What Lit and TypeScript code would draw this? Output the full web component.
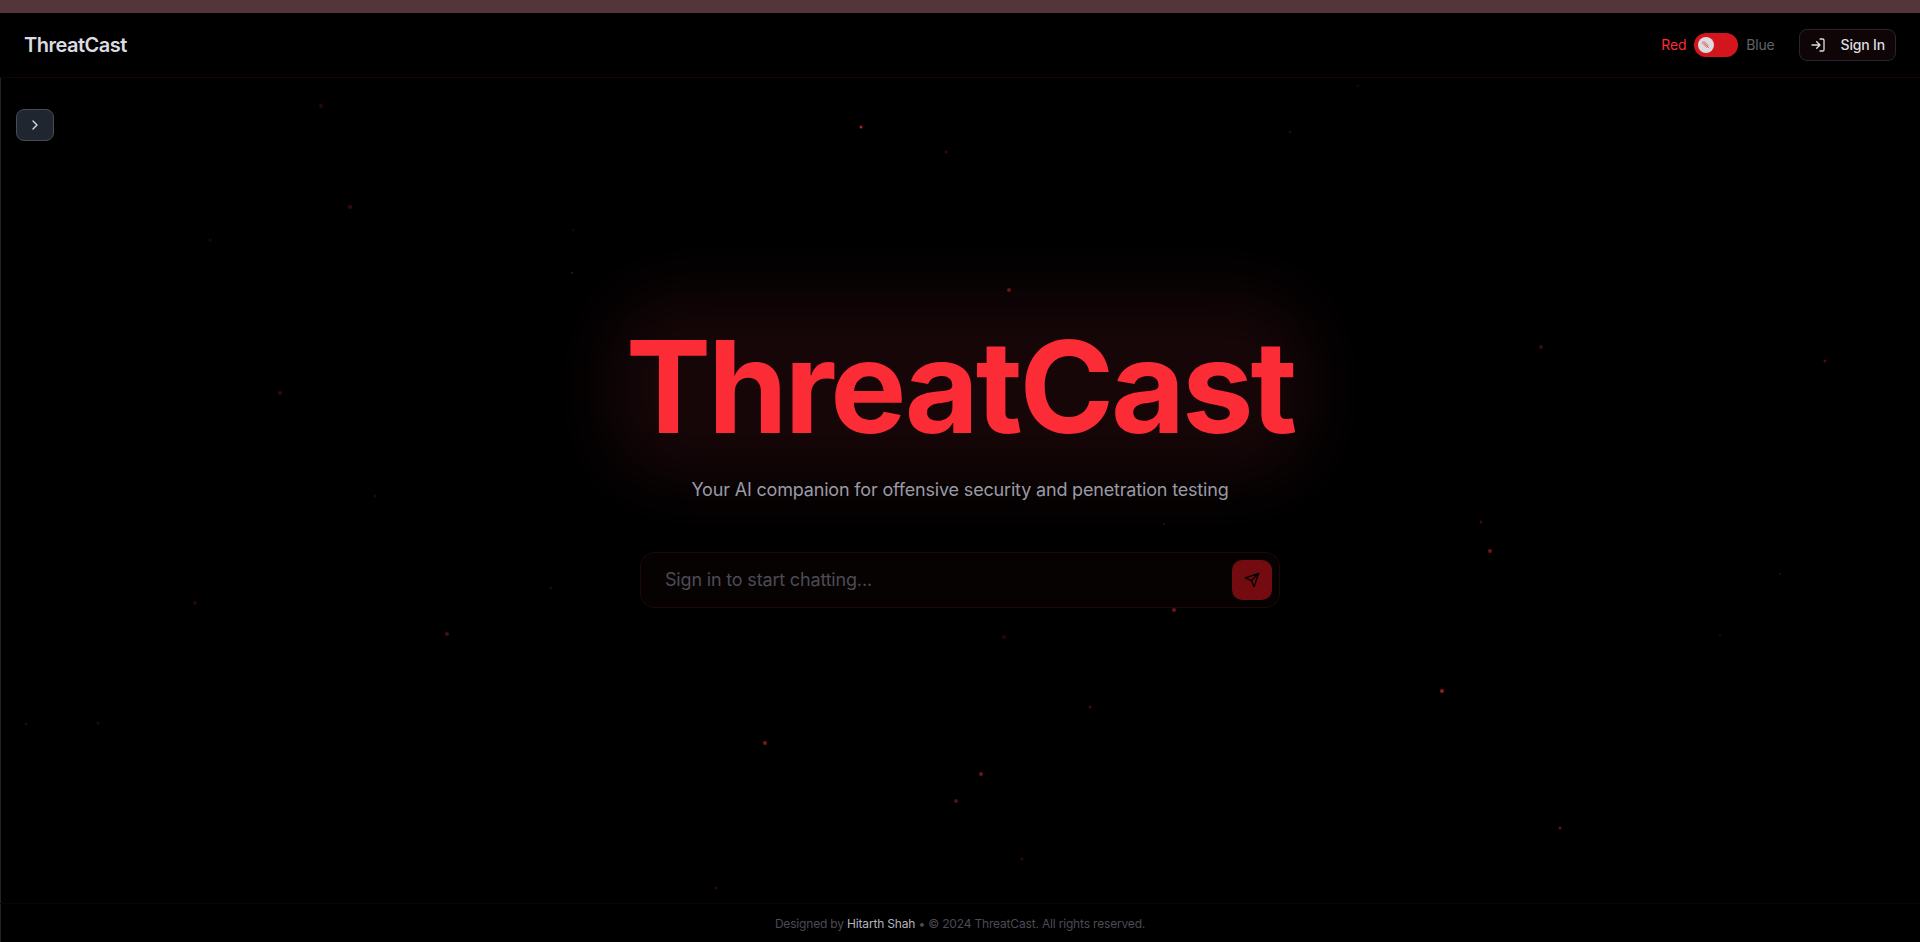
import { LitElement, html, svg, css } from "lit";
import { customElement, state } from "lit/decorators.js";

interface Particle {
  x: number;
  y: number;
  r: number;
  o: number;
}

const PARTICLES: Particle[] = [
  [321, 106, 2, 0.16], [861, 127, 1.5, 0.7], [946, 152, 1.5, 0.2], [1290, 132, 1.5, 0.15],
  [1358, 86, 1.5, 0.1], [350, 207, 2, 0.22], [210, 240, 1.5, 0.15], [573, 230, 1.5, 0.1],
  [572, 273, 1, 0.3], [1009, 290, 2, 0.4], [1541, 347, 2, 0.25], [1825, 361, 1.5, 0.3],
  [280, 393, 2, 0.2], [375, 496, 1.5, 0.15], [1481, 522, 1.5, 0.25], [1490, 551, 2, 0.45],
  [1780, 574, 1, 0.2], [195, 603, 2, 0.15], [551, 588, 1.5, 0.15], [447, 634, 2, 0.3],
  [1174, 610, 2, 0.45], [1004, 637, 2, 0.15], [1720, 635, 1, 0.2], [1442, 691, 2, 0.6],
  [1090, 707, 1.5, 0.25], [26, 724, 1.5, 0.15], [98, 723, 1.5, 0.15], [765, 743, 2, 0.5],
  [981, 774, 2, 0.45], [956, 801, 2, 0.35], [1022, 859, 1.5, 0.2], [1560, 828, 1.5, 0.4],
  [716, 888, 1.5, 0.2], [1164, 524, 1, 0.2],
].map(([x, y, r, o]) => ({ x: (x / 1920) * 100, y: (y / 942) * 100, r, o }));

@customElement("app-root")
export class AppRoot extends LitElement {
  @state() private blueTeam = false;

  static styles = css`
    :host {
      display: flex;
      flex-direction: column;
      position: relative;
      isolation: isolate;
      min-height: 100vh;
      overflow: hidden;
      background: #000;
      color: #d1d5db;
      font-family: Inter, "Liberation Sans", sans-serif;
      font-size: 16px;
      line-height: 24px;
      letter-spacing: -0.011em;
    }
    *, *::before, *::after { box-sizing: border-box; }
    .particles {
      position: absolute;
      inset: 0;
      width: 100%;
      height: 100%;
      pointer-events: none;
      fill: #fb2c36;
    }
    .strip { height: 13px; background: #53353a; }
    .header {
      display: flex;
      align-items: center;
      justify-content: space-between;
      height: 65px;
      padding: 0 24px;
      border-bottom: 1px solid #150507;
      font-size: 14px;
      line-height: 20px;
    }
    .brand {
      color: #dcdce0;
      font-size: 20px;
      line-height: 28px;
      font-weight: 600;
      letter-spacing: -0.025em;
      text-decoration: none;
    }
    .actions { display: flex; align-items: center; gap: 24px; }
    .team { display: flex; align-items: center; gap: 8px; color: #62626c; cursor: pointer; }
    .on { color: #fb2c36; }
    .switch { display: grid; width: 44px; height: 24px; }
    .switch input {
      grid-area: 1 / 1;
      appearance: none;
      width: 44px;
      height: 24px;
      margin: 0;
      border-radius: 12px;
      background: #d3151e;
    }
    .switch input:checked { background: #1d5fe0; }
    .knob {
      grid-area: 1 / 1;
      display: grid;
      place-items: center;
      align-self: center;
      width: 16px;
      height: 16px;
      margin-left: 4px;
      border-radius: 50%;
      background: #dcdce0;
      color: #e0303a;
      pointer-events: none;
    }
    input:checked + .knob { margin-left: 24px; }
    .icon {
      display: block;
      fill: none;
      stroke: currentColor;
      stroke-width: 2;
      stroke-linecap: round;
      stroke-linejoin: round;
    }
    button { font: inherit; letter-spacing: inherit; margin: 0; cursor: pointer; }
    .signin {
      display: flex;
      align-items: center;
      gap: 15px;
      height: 32px;
      padding: 0 10px;
      border: 1px solid #26262e;
      border-radius: 8px;
      background: #0f0406;
      color: #dcdce0;
      font-weight: 500;
    }
    .body { display: flex; flex: 1; border-left: 1px solid #1e2530; }
    .expand {
      position: absolute;
      top: 109px;
      left: 16px;
      display: grid;
      place-items: center;
      width: 38px;
      height: 32px;
      padding: 0;
      border: 1px solid #4a4a52;
      border-radius: 8px;
      background: #1f2630;
      color: #dcdce0;
    }
    .column { display: flex; flex: 1; flex-direction: column; margin-left: -1px; }
    .hero {
      display: flex;
      flex: 1;
      flex-direction: column;
      align-items: center;
      justify-content: center;
      padding: 0 16px 50px;
    }
    .title {
      position: relative;
      margin: 0 0 25px;
      color: #fb2c36;
      font-size: 128px;
      line-height: 128px;
      font-weight: 700;
      letter-spacing: -0.025em;
    }
    .title::before {
      content: "";
      position: absolute;
      z-index: -1;
      inset: -28px -16px;
      border-radius: 64px;
      background: #170608;
      filter: blur(32px);
    }
    .tagline {
      margin: 0 0 48px;
      color: #9a9aa5;
      font-size: 18px;
      line-height: 28px;
      text-align: center;
    }
    .chat {
      display: flex;
      align-items: center;
      width: 100%;
      max-width: 640px;
      height: 56px;
      padding: 0 7px 0 24px;
      border: 1px solid #1c0709;
      border-radius: 14px;
      background: #070202;
    }
    .chat input {
      flex: 1;
      min-width: 0;
      padding: 0;
      border: 0;
      outline: 0;
      background: none;
      color: #dcdce0;
      font: inherit;
      font-size: 18px;
      line-height: 28px;
      letter-spacing: inherit;
    }
    .chat input::placeholder { color: #4c4b55; opacity: 1; }
    .send {
      display: grid;
      place-items: center;
      width: 40px;
      height: 40px;
      padding: 0;
      border: 0;
      border-radius: 10px;
      background: #730b10;
      color: #000;
    }
    .footer {
      padding: 12px 16px 10px;
      border-top: 1px solid #0b0506;
      color: #4c4b55;
      font-size: 12px;
      line-height: 16px;
      text-align: center;
    }
    .footer a { color: #b4b4bd; text-decoration: none; }
  `;

  render() {
    return html`
      <svg class="particles" aria-hidden="true">
        ${PARTICLES.map(
          (p) => svg`<circle cx="${p.x}%" cy="${p.y}%" r=${p.r} fill-opacity=${p.o}></circle>`
        )}
      </svg>
      <div class="strip"></div>
      <header class="header">
        <a class="brand" href="#">ThreatCast</a>
        <div class="actions">
          <label class="team">
            <span class=${this.blueTeam ? "" : "on"}>Red</span>
            <span class="switch">
              <input
                type="checkbox"
                role="switch"
                .checked=${this.blueTeam}
                @change=${(e: Event) => (this.blueTeam = (e.target as HTMLInputElement).checked)}
              />
              <span class="knob">
                <svg class="icon" width="8" height="8" viewBox="0 0 24 24">
                  <path d="M3 3h5l11 11-5 5L3 8ZM7 7l10 10M21 21l-3-3" />
                </svg>
              </span>
            </span>
            <span>Blue</span>
          </label>
          <button class="signin" type="button">
            <svg class="icon" width="16" height="16" viewBox="0 0 24 24">
              <path d="M15 3h4a2 2 0 0 1 2 2v14a2 2 0 0 1-2 2h-4M10 17l5-5-5-5M15 12H3" />
            </svg>
            Sign In
          </button>
        </div>
      </header>
      <div class="body">
        <button class="expand" type="button" aria-label="Open sidebar">
          <svg class="icon" width="16" height="16" viewBox="0 0 24 24"><path d="m9 18 6-6-6-6" /></svg>
        </button>
        <div class="column">
          <main class="hero">
            <h1 class="title">ThreatCast</h1>
            <p class="tagline">Your AI companion for offensive security and penetration testing</p>
            <form class="chat" @submit=${(e: Event) => e.preventDefault()}>
              <input type="text" aria-label="Message" placeholder="Sign in to start chatting..." />
              <button class="send" type="submit" aria-label="Send">
                <svg class="icon" width="16" height="16" viewBox="0 0 24 24">
                  <path d="m22 2-7 20-4-9-9-4ZM22 2 11 13" />
                </svg>
              </button>
            </form>
          </main>
          <footer class="footer">
            Designed by <a href="#">Hitarth Shah</a> • © 2024 ThreatCast. All rights reserved.
          </footer>
        </div>
      </div>
    `;
  }
}
